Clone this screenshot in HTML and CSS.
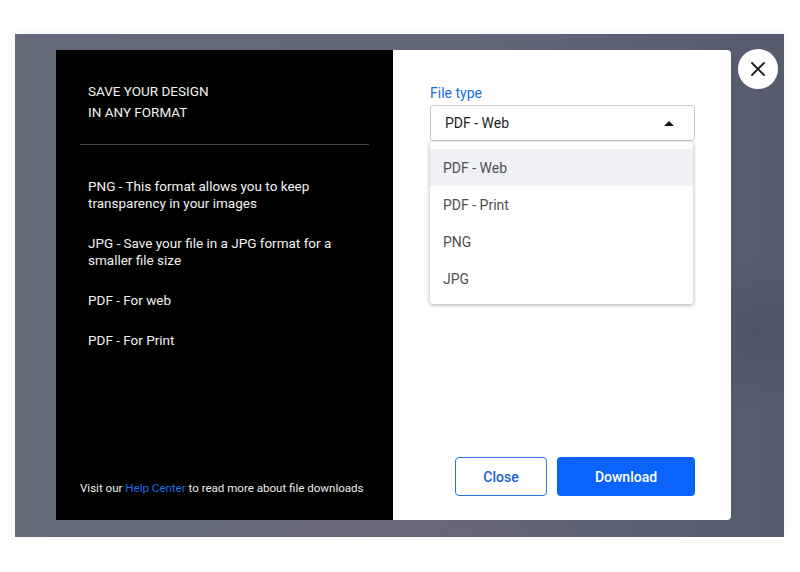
FILE: index.html
```html
<!DOCTYPE html>
<html>
<head>
<meta charset="utf-8">
<link rel="stylesheet" href="styles.css">
</head>
<body>
<div class="backdrop">
  <div class="modal">
    <aside class="info">
      <h2 class="title">SAVE YOUR DESIGN<br>IN ANY FORMAT</h2>
      <hr class="divider">
      <ul class="formats">
        <li>PNG - This format allows you to keep transparency in your images</li>
        <li>JPG - Save your file in a JPG format for a smaller file size</li>
        <li>PDF - For web</li>
        <li>PDF - For Print</li>
      </ul>
      <p class="footer">Visit our <a class="link">Help Center</a> to read more about file downloads</p>
    </aside>
    <section class="form">
      <label class="label">File type</label>
      <div class="select-wrap">
        <div class="select">
          <span>PDF - Web</span>
          <span class="caret"></span>
        </div>
        <ul class="menu">
          <li class="item active">PDF - Web</li>
          <li class="item">PDF - Print</li>
          <li class="item">PNG</li>
          <li class="item">JPG</li>
        </ul>
      </div>
      <div class="actions">
        <button class="btn btn-outline">Close</button>
        <button class="btn btn-primary">Download</button>
      </div>
    </section>
  </div>
  <button class="close-x" aria-label="Close">
    <svg width="16" height="16" viewBox="0 0 16 16"><path d="M2 2 L14 14 M14 2 L2 14" stroke="#1c1c1c" stroke-width="1.8" stroke-linecap="round" fill="none"/></svg>
  </button>
</div>
</body>
</html>
```
FILE: styles.css
```css
* { box-sizing: border-box; }
html, body { margin: 0; padding: 0; background: #fff; }
body { font-family: Roboto, "Liberation Sans", sans-serif; }

.backdrop {
  margin: 34px 15px 0 15px;
  width: 769px;
  height: 503px;
  padding: 16px 0 0 41px;
  display: flex;
  align-items: flex-start;
  gap: 7px;
  background:
    radial-gradient(ellipse 200px 50px at 380px 505px, rgba(118,98,120,0.5), rgba(118,98,120,0) 100%),
    radial-gradient(ellipse 120px 80px at 740px 300px, rgba(70,76,94,0.5), rgba(70,76,94,0) 100%),
    linear-gradient(90deg, #646a7a 0%, #616777 60%, #555b6c 100%);
  box-shadow: 0 0 12px rgba(0,0,0,0.06);
}

.modal {
  width: 675px;
  height: 470px;
  display: flex;
  border-radius: 0 4px 4px 0;
  overflow: hidden;
  background: #fff;
}

.info {
  width: 337px;
  background: #000;
  color: #f2f2f2;
  padding: 31px 24px 0 24px;
  display: flex;
  flex-direction: column;
}

.title {
  margin: 0;
  padding-left: 8px;
  font-size: 13.5px;
  font-weight: 400;
  line-height: 21px;
  letter-spacing: 0;
}

.divider {
  margin: 21px 0 0 0;
  border: 0;
  height: 1px;
  background: #444;
}

.formats {
  list-style: none;
  margin: 33px 0 0 0;
  padding: 0 0 0 8px;
  font-size: 13.5px;
  line-height: 17px;
}
.formats li { margin-bottom: 23px; }

.footer {
  margin: auto -6px 0 0;
  padding-bottom: 23px;
  font-size: 11.55px;
  line-height: 17px;
  white-space: nowrap;
  color: #eee;
}
.link { color: #1f6fe5; }

.form {
  flex: 1;
  padding: 34px 36px 24px 37px;
  display: flex;
  flex-direction: column;
}

.label {
  color: #1a6be0;
  font-size: 14px;
  line-height: 18px;
  margin-bottom: 3px;
}

.select-wrap { position: relative; }

.select {
  height: 36px;
  border: 1px solid #c9c9c9;
  border-radius: 3px;
  padding: 0 20px 0 14px;
  display: flex;
  align-items: center;
  justify-content: space-between;
  font-size: 14px;
  color: #1e1e1e;
}
.caret {
  width: 0; height: 0;
  border-left: 5px solid transparent;
  border-right: 5px solid transparent;
  border-bottom: 5px solid #111;
}

.menu {
  position: absolute;
  top: 37px;
  left: 0;
  width: 263px;
  margin: 0;
  padding: 7px 0;
  list-style: none;
  background: #fff;
  border-radius: 3px;
  box-shadow: 0 1px 4px rgba(0,0,0,0.35);
}
.item {
  height: 37px;
  display: flex;
  align-items: center;
  padding-left: 13px;
  font-size: 14px;
  color: #505050;
}
.item.active { background: #f0f1f6; }

.actions {
  margin-top: auto;
  display: flex;
  justify-content: flex-end;
  gap: 10px;
}
.btn {
  height: 39px;
  border-radius: 4px;
  font-family: Roboto, "Liberation Sans", sans-serif;
  font-size: 14px;
  font-weight: 500;
  cursor: pointer;
}
.btn-outline {
  width: 92px;
  background: #fff;
  border: 1px solid #2f73e0;
  color: #1b5fd0;
}
.btn-primary {
  width: 138px;
  background: #0a64fb;
  border: 0;
  color: #fff;
}

.close-x {
  width: 40px;
  height: 40px;
  margin-top: -1px;
  border-radius: 50%;
  border: 0;
  background: #fff;
  display: flex;
  align-items: center;
  justify-content: center;
  padding: 0;
}
```
